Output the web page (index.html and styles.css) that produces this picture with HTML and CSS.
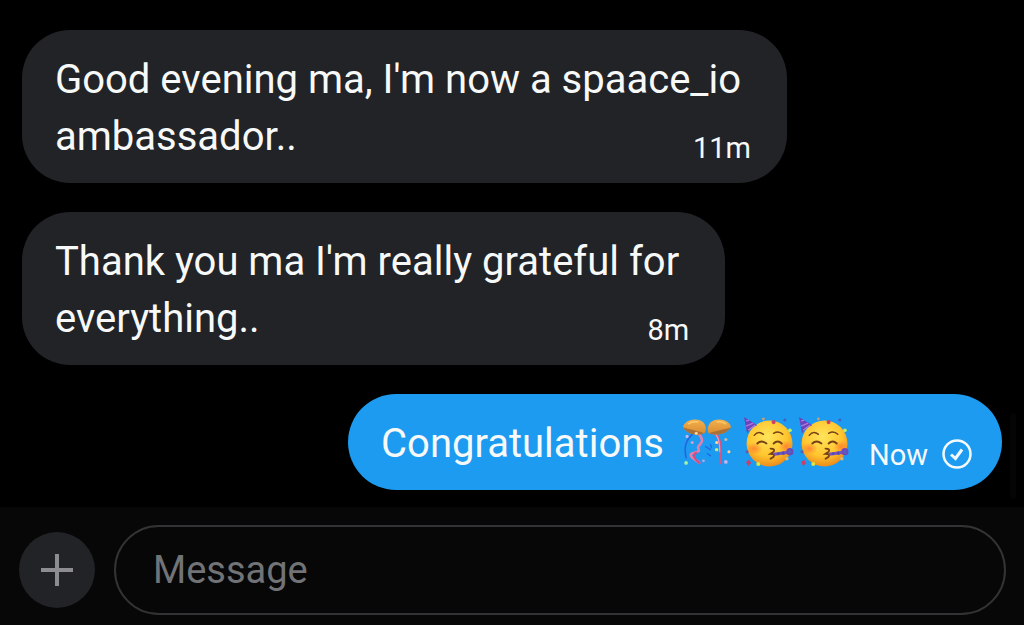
FILE: index.html
```html
<!DOCTYPE html>
<html lang="en">
<head>
    <meta charset="UTF-8">
    <meta name="viewport" content="width=device-width, initial-scale=1.0">
    <title>Messages</title>
    <link rel="stylesheet" href="styles.css">
</head>
<body>
    <main class="messages">
        <div class="bubble received">
            <p class="text">Good evening ma, I'm now a spaace_io<br>ambassador..</p>
            <span class="time">11m</span>
        </div>
        <div class="bubble received">
            <p class="text">Thank you ma I'm really grateful for<br>everything..</p>
            <span class="time">8m</span>
        </div>
        <div class="bubble sent">
            <p class="text">Congratulations</p>
            <div class="emojis">
                <svg class="emoji ball" viewBox="0 0 50 50" role="img" aria-label="confetti ball">
                    <defs>
                        <linearGradient id="gold" x1="0" y1="0" x2="0" y2="1">
                            <stop offset="0" stop-color="#f2b04c"/>
                            <stop offset="1" stop-color="#d98a30"/>
                        </linearGradient>
                    </defs>
                    <g fill="none" stroke-linecap="round">
                        <path d="M10 17C3 24 2 30 4 40" stroke="#2463df" stroke-width="1.5"/>
                        <path d="M16 16C23 24 18 26 16 29S21 33 12 35S14 42 17 45" stroke="#e77fae" stroke-width="2.5"/>
                        <path d="M14 35C9 37 13 42 17 45" stroke="#cf4e83" stroke-width="2"/>
                        <path d="M33 17C39 22 37 31 38 45" stroke="#d45586" stroke-width="2.5"/>
                        <path d="M32 16C37 20 37 28 37 34" stroke="#f096bb" stroke-width="1"/>
                        <path d="M23 29L28 32M28 27L29 30M25 36L28 38" stroke="#2463df" stroke-width="1.2"/>
                    </g>
                    <path d="M1 10C2 4 10 1 17 3C23 5 25 11 22 16C14 19 4 16 1 10Z" fill="url(#gold)"/>
                    <path d="M1 10C6 12 15 13 22 16C14 19 4 16 1 10Z" fill="#a8703a"/>
                    <path d="M48 10C47 4 39 1 32 3C26 5 24 11 26 16C35 19 44 16 48 10Z" fill="url(#gold)"/>
                    <path d="M48 10C43 12 34 13 26 16C35 19 44 16 48 10Z" fill="#a8703a"/>
                    <path d="M6 7Q10 4 16 5M34 5Q40 4 43 7" fill="none" stroke="#ffc86c" stroke-width="1.5"/>
                    <g fill="#ffd49a">
                        <circle cx="14" cy="16" r="1.5"/><circle cx="5" cy="19" r="1.5" fill="#c8b8ed"/>
                        <circle cx="10" cy="25" r="1.5" fill="#d5a0bf"/><circle cx="34" cy="25" r="1.5"/>
                        <circle cx="43" cy="22" r="1.5" fill="#c2bfae"/><circle cx="46" cy="34" r="1.5"/>
                        <circle cx="34" cy="32" r="1.7" fill="#c4ef7d"/><circle cx="43" cy="44" r="1.8" fill="#c6b4ef"/>
                        <circle cx="4" cy="45" r="1.8" fill="#a7f2a4"/><circle cx="21" cy="43" r="1.4" fill="#b5a4df"/>
                    </g>
                </svg>
                <svg class="emoji" viewBox="0 0 50 50" role="img" aria-label="partying face">
                    <defs>
                        <radialGradient id="face" cx=".46" cy=".35" r=".65">
                            <stop offset="0" stop-color="#ffe45b"/>
                            <stop offset=".65" stop-color="#ffc52e"/>
                            <stop offset="1" stop-color="#ed8c1c"/>
                        </radialGradient>
                        <radialGradient id="cheek">
                            <stop offset="0" stop-color="#ff7432" stop-opacity=".75"/>
                            <stop offset="1" stop-color="#ff7432" stop-opacity="0"/>
                        </radialGradient>
                    </defs>
                    <g id="party">
                        <circle cx="26" cy="26" r="22.5" fill="url(#face)"/>
                        <ellipse cx="11" cy="31" rx="8" ry="6" fill="url(#cheek)"/>
                        <ellipse cx="42" cy="29" rx="7" ry="6" fill="url(#cheek)"/>
                        <g fill="none" stroke="#754116" stroke-width="1.4" stroke-linecap="round">
                            <path d="M11 18Q15 13 20 17M30 16Q35 13 39 17"/>
                            <path d="M14 26Q18 22 23 26M30 26Q34 22 38 26" stroke-width="1.8"/>
                            <path d="M27 31Q32 31 30 34L27 36Q32 36 30 39L27 41" stroke-width="1.8"/>
                        </g>
                        <path d="M1 0L14 8Q8 10 4 16Z" fill="#6c42bb"/>
                        <path d="M3 4L6 3M3 9L10 6M5 13L12 8" stroke="#aa7cdb" stroke-width="1.3"/>
                        <path d="M30 35L44 33L45 36L31 38Z" fill="#7950bd"/>
                        <path d="M34 35L35 37M39 34L40 37" stroke="#4053b0" stroke-width="2"/>
                        <circle cx="46" cy="34" r="2.5" fill="#4568c8" stroke="#7248b8" stroke-width="2"/>
                        <g fill="#d13d63">
                            <circle cx="30" cy="5" r="2"/><path d="M3 44L6 42L8 45L5 48Z"/>
                            <circle cx="20" cy="2" r="1.4" fill="#cc9d75"/><circle cx="41" cy="3" r="1.5" fill="#425fc5"/>
                            <circle cx="46" cy="13" r="1.8" fill="#bbed6d"/><circle cx="15" cy="46" r="2" fill="#d8e745"/>
                            <circle cx="43" cy="41" r="1.7" fill="#d6b97b"/><circle cx="4" cy="34" r="1.5" fill="#6658a9"/>
                        </g>
                    </g>
                </svg>
                <svg class="emoji" viewBox="0 0 50 50" role="img" aria-label="partying face">
                    <use href="#party"/>
                </svg>
            </div>
            <span class="time">Now</span>
            <svg class="check" viewBox="0 0 30 30" fill="none" stroke="#f3faff" role="img" aria-label="Sent">
                <circle cx="15" cy="15" r="13.5" stroke-width="2.5"/>
                <path d="M9 15.5L13.5 19.5L20 10.5" stroke-width="3"/>
            </svg>
        </div>
    </main>
    <div class="scrollbar"></div>

    <form class="composer">
        <button type="button" class="add" aria-label="Add attachment">
            <svg viewBox="0 0 32 32" stroke="#8d8d91" stroke-width="4">
                <path d="M16 0V32M0 16H32"/>
            </svg>
        </button>
        <input type="text" class="field" placeholder="Message" aria-label="Message">
    </form>
</body>
</html>
```
FILE: styles.css
```css
* {
    margin: 0;
    padding: 0;
    box-sizing: border-box;
    font-family: Roboto, "Noto Sans", sans-serif;
}
body {
    display: flex;
    flex-direction: column;
    min-height: 100vh;
    position: relative;
    background: #000;
    color: #f7f9f9;
}
.messages {
    flex: 1;
    display: flex;
    flex-direction: column;
    gap: 29px;
    padding: 30px 22px 15px;
}
.bubble {
    padding: 21px 36px 18px 33px;
    border-radius: 48px;
    font-size: 40px;
    line-height: 57px;
}
.received {
    display: grid;
    align-self: flex-start;
    background: #212327;
}
.received .text,
.received .time {
    grid-area: 1 / 1;
}
.received .text {
    padding-right: 10px;
}
.received .time {
    place-self: end;
}
.sent {
    display: flex;
    align-items: flex-end;
    align-self: flex-end;
    padding-right: 30px;
    background: #1d9bf0;
}
.time {
    font-size: 29px;
    line-height: 34px;
}
.emojis {
    display: flex;
    gap: 4px;
    margin: 0 20px 4px 18px;
}
.emoji {
    width: 51px;
    height: 51px;
}
.ball {
    margin-right: 6px;
}
.check {
    width: 30px;
    height: 30px;
    margin: 0 0 3px 14px;
}
.scrollbar {
    position: absolute;
    right: 8px;
    bottom: 126px;
    width: 6px;
    height: 86px;
    border-radius: 3px;
    background: #050505;
}
.composer {
    display: flex;
    align-items: center;
    gap: 19px;
    padding: 18px 18px 10px 19px;
    background: #070707;
}
.add {
    display: flex;
    align-items: center;
    justify-content: center;
    flex-shrink: 0;
    width: 76px;
    height: 76px;
    border: none;
    border-radius: 50%;
    background: #212327;
    cursor: pointer;
}
.add svg {
    width: 32px;
    height: 32px;
}
.field {
    flex: 1;
    min-width: 0;
    height: 90px;
    padding: 0 37px;
    border: 2px solid #333335;
    border-radius: 45px;
    outline: none;
    background: transparent;
    color: #f7f9f9;
    font-size: 38px;
}
.field::placeholder {
    color: #717377;
}
```
